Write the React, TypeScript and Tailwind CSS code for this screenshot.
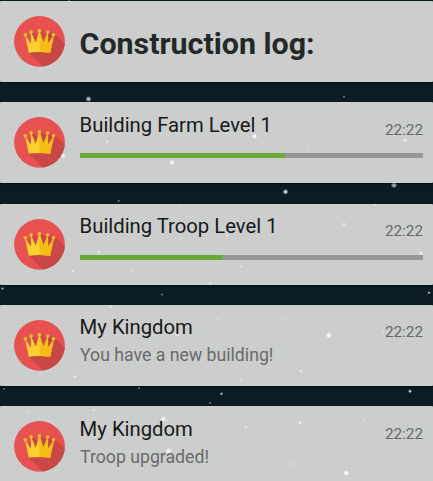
const STARS: [number, number, number, number][] = [
  // x, y, radius, opacity
  [88.5, 99, 2.4, 0.75], [344, 96.8, 1, 0.5], [285.5, 191.8, 2.3, 0.85], [394, 185, 2.6, 0.7],
  [118.7, 200.8, 1.1, 0.5], [2.5, 288.5, 1.3, 0.7], [162, 294.5, 1.1, 0.5], [429, 292.8, 1.4, 0.65],
  [4, 389, 1.1, 0.4], [139, 388.3, 1.1, 0.5], [210, 403, 1.1, 0.5], [221.5, 393.8, 1.4, 0.7],
  [410, 391.2, 1.6, 0.8], [69, 0.5, 1, 0.3], [172, 162.5, 2.4, 0.9], [254.5, 136.3, 2.4, 0.9],
  [226.7, 133.3, 1.2, 0.6], [107, 141.5, 1.5, 0.6], [63, 155.5, 2.2, 0.9], [405, 140.5, 1.6, 0.7],
  [307.5, 148.5, 1, 0.6], [181, 205.5, 1.2, 0.4], [48, 208.5, 1.2, 0.4], [181, 238.5, 1.1, 0.4],
  [99, 252.3, 1.5, 0.7], [73, 271, 1.5, 0.6], [133, 271, 1.3, 0.4], [210, 283.5, 1.5, 0.5],
  [227, 235.5, 1.5, 0.6], [344, 224.3, 1.6, 0.7], [375, 205, 1.3, 0.4], [271, 257, 2, 0.5],
  [421, 253.5, 2.2, 0.7], [240.5, 266.5, 1.3, 0.5], [352, 266.5, 1.2, 0.4], [111, 306.8, 1.4, 0.5],
  [218, 319.5, 1.2, 0.4], [282.5, 319.5, 1.3, 0.4], [177, 334, 2, 0.8], [132, 360, 1.6, 0.6],
  [75, 376.5, 1.5, 0.7], [329, 335.3, 2.6, 0.95], [383.5, 332, 1.1, 0.4], [301, 371, 1.5, 0.6],
  [241, 379.5, 1.2, 0.4], [94, 410, 1.3, 0.6], [27, 412.5, 1.2, 0.4], [163.5, 419, 2.4, 0.8],
  [168.5, 451, 2.6, 0.9], [246, 427, 1.5, 0.5], [300, 422.5, 1.6, 0.7], [364.5, 419.5, 1.1, 0.5],
  [290.5, 464, 1.3, 0.5], [346.3, 473, 2.6, 0.95],
];

function StarField() {
  return (
    <svg className="absolute inset-0" width="433" height="481" viewBox="0 0 433 481" aria-hidden="true">
      <defs>
        <radialGradient id="star">
          <stop offset="0.35" stopColor="#e9f0f0" />
          <stop offset="1" stopColor="#e9f0f0" stopOpacity="0" />
        </radialGradient>
      </defs>
      {STARS.map(([x, y, r, o]) => (
        <circle key={`${x}-${y}`} cx={x} cy={y} r={r * 1.25} fill="url(#star)" opacity={o} />
      ))}
    </svg>
  );
}

function CrownIcon() {
  return (
    <svg className="h-[51px] w-[51px] shrink-0" viewBox="0 0 51 51" aria-hidden="true">
      <defs>
        <clipPath id="disc">
          <circle cx="25.5" cy="25.4" r="25.4" />
        </clipPath>
      </defs>
      <circle cx="25.5" cy="25.4" r="25.4" fill="#e85151" />
      <g clipPath="url(#disc)">
        <path
          d="M18.2 14.6 L25 21.4 L26.5 13.2 L32 18.8 L34.8 14.5 L39 18 L40.8 17.6 L56 32.8 V56 H34.1 L14.8 36.7 L15.2 26Z"
          fill="#c94747"
        />
      </g>
      <path
        d="M10.9 19 L16.9 27.4 L17 15.8 L21.7 26.4 L25.5 14.3 L29.3 26.4 L34 15.8 L34.1 27.4 L40 19 L36.2 36.7 Q25.5 35.1 14.8 36.7Z"
        fill="#fcd02e"
      />
      <path
        d="M25.5 14.3 L29.3 26.4 L34 15.8 L34.1 27.4 L40 19 L36.2 36.7 Q31 35.9 25.5 35.9Z"
        fill="#f6bd18"
      />
      <g fill="#f9c522">
        <circle cx="11.3" cy="18.8" r="1.8" />
        <circle cx="17.1" cy="16" r="1.8" />
        <circle cx="25.4" cy="14.8" r="1.8" />
        <circle cx="33.8" cy="16" r="1.8" />
        <circle cx="39.5" cy="18.8" r="1.8" />
      </g>
    </svg>
  );
}

interface Entry {
  title: string;
  message?: string;
  progress?: number;
}

const ENTRIES: Entry[] = [
  { title: "Building Farm Level 1", progress: 59.8 },
  { title: "Building Troop Level 1", progress: 41.7 },
  { title: "My Kingdom", message: "You have a new building!" },
  { title: "My Kingdom", message: "Troop upgraded!" },
];

const CARD =
  "flex h-[81.2px] shrink-0 gap-[15.5px] rounded-[1px] border-t border-white/5 bg-[#fcfaf8]/80 pl-[13.5px] pr-[10px] pt-[14px] shadow-[0_1px_2px_rgba(0,0,0,0.5)]";

function LogCard({ title, message, progress }: Entry) {
  return (
    <article className={CARD}>
      <CrownIcon />
      <div className="-mt-[6.5px] min-w-0 flex-1">
        <div className="flex h-[34px] justify-between">
          <h2 className="-ml-[0.4px] whitespace-nowrap text-[20.25px] leading-7 text-[#171919]">{title}</h2>
          <time className="mt-[5px] text-[15.3px] leading-7 text-[#666868]">22:22</time>
        </div>
        {message && <p className="-mt-[4px] text-[17.7px] leading-6 text-[#696b6b]">{message}</p>}
        {progress !== undefined && (
          <div className="mt-[8.5px] h-[5px] bg-[#969797]">
            <div className="h-full bg-[#68aa35]" style={{ width: `${progress}%` }} />
          </div>
        )}
      </div>
    </article>
  );
}

export default function App() {
  return (
    <main className="relative h-[481px] w-[433px] overflow-hidden bg-[#0a1c24] font-[Roboto,sans-serif]">
      <StarField />
      <div className="relative flex flex-col gap-[20.1px] pt-[1px]">
        <header className={CARD}>
          <CrownIcon />
          <h1 className="-ml-[0.5px] mt-[8px] whitespace-nowrap text-[30.4px] font-bold leading-10 text-[#252828]">Construction log:</h1>
        </header>
        {ENTRIES.map((entry, i) => (
          <LogCard key={i} {...entry} />
        ))}
      </div>
    </main>
  );
}
